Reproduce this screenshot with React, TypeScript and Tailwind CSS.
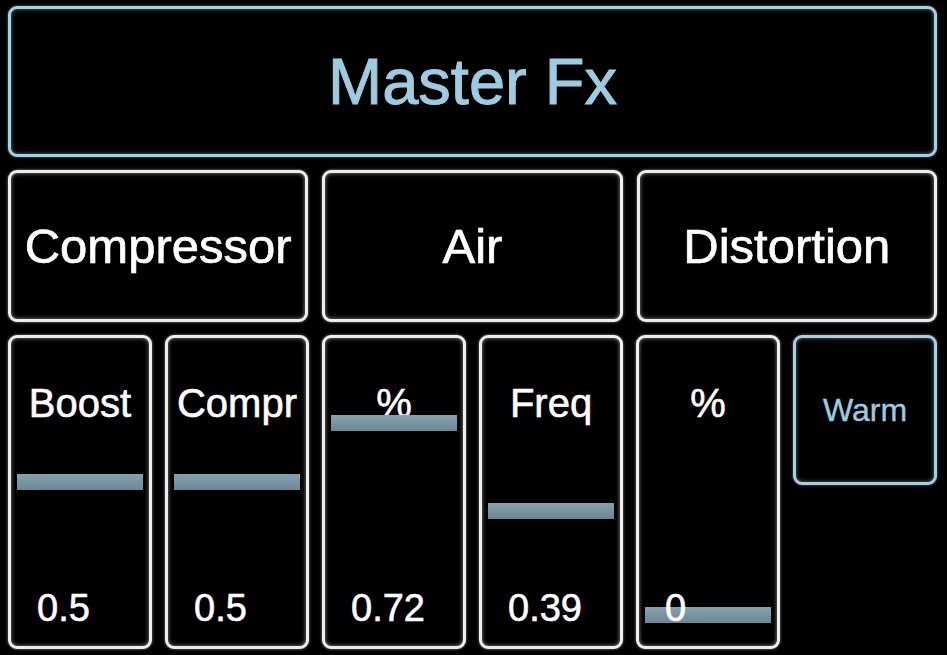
import React from "react";

const font = { fontFamily: '"Liberation Sans", Arial, Helvetica, sans-serif' };

const whiteBox =
  "border-[3px] border-[#eeeeee] rounded-[9px] bg-black shadow-[0_0_3px_rgba(255,255,255,0.55),inset_0_0_4px_rgba(255,255,255,0.55)]";
const blueBox =
  "border-[3px] border-[#a8d0e2] rounded-[9px] bg-black shadow-[0_0_3px_rgba(168,208,226,0.55),inset_0_0_4px_rgba(168,208,226,0.55)]";

function Slider({ label, value }: { label: string; value: number }) {
  const top = 269 - 266 * value;
  return (
    <div className={`relative flex flex-col justify-between ${whiteBox}`}>
      <div className="pt-[45px] text-center text-[40px] leading-none text-white [-webkit-text-stroke:0.6px_#fff]">
        {label}
      </div>
      <div
        className="absolute left-[6px] right-[6px] h-[16px] bg-linear-to-b from-[#86a2ae] to-[#6d8793]"
        style={{ top }}
      />
      <div className="relative pb-[19px] pl-[26px] text-[38px] leading-none text-white [-webkit-text-stroke:0.6px_#fff]">
        {value}
      </div>
    </div>
  );
}

export default function App() {
  return (
    <div
      className="w-[947px] h-[655px] bg-black pt-[6px] pl-[8px] pr-[10px] flex flex-col gap-[13px]"
      style={font}
    >
      <div className={`h-[151px] flex items-center justify-center ${blueBox}`}>
        <span className="text-[65px] leading-none text-[#9ecbe0] [-webkit-text-stroke:1px_#9ecbe0]">
          Master Fx
        </span>
      </div>
      <div className="h-[152px] grid grid-cols-3 gap-[14px]">
        {["Compressor", "Air", "Distortion"].map((t) => (
          <div key={t} className={`flex items-center justify-center ${whiteBox}`}>
            <span className="text-[49px] leading-none text-white [-webkit-text-stroke:0.7px_#fff]">{t}</span>
          </div>
        ))}
      </div>
      <div className="h-[314px] grid grid-cols-6 gap-[13px] items-start">
        <div className="h-full grid"><Slider label="Boost" value={0.5} /></div>
        <div className="h-full grid"><Slider label="Compr" value={0.5} /></div>
        <div className="h-full grid"><Slider label="%" value={0.72} /></div>
        <div className="h-full grid"><Slider label="Freq" value={0.39} /></div>
        <div className="h-full grid"><Slider label="%" value={0} /></div>
        <div className={`h-[150px] flex items-center justify-center ${blueBox}`}>
          <span className="text-[32px] leading-none text-[#9ecbe0] [-webkit-text-stroke:0.4px_#9ecbe0]">Warm</span>
        </div>
      </div>
    </div>
  );
}
